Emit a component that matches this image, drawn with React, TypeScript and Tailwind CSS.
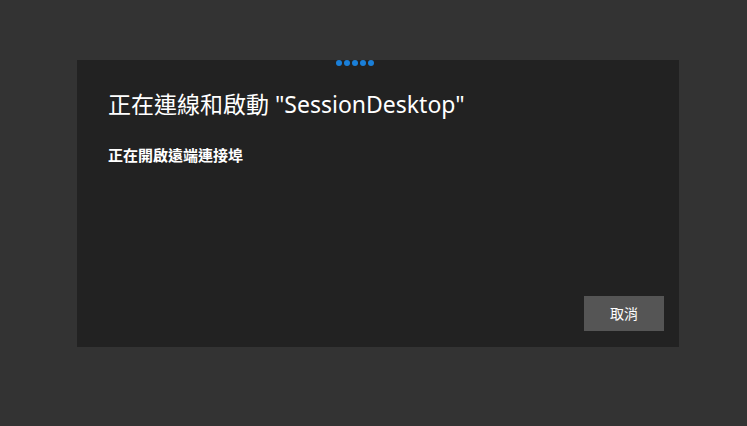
export default function App() {
  return (
    <div
      className="w-[747px] h-[426px] bg-[#333333] flex pl-[77px] pt-[60px]"
      style={{ fontFamily: '"Segoe UI", "Noto Sans", "Noto Sans CJK TC", sans-serif' }}
    >
      <div className="relative w-[602px] h-[287px] bg-[#222222] flex flex-col">
        {/* progress dots */}
        <div className="absolute top-[0px] left-[259px] flex gap-[2.5px]">
          {[0, 1, 2, 3, 4].map(i => (
            <span key={i} className="w-[5.5px] h-[5.5px] rounded-full bg-[#1a7fd8]" />
          ))}
        </div>
        <div className="pl-[31px] pt-[29px]">
          <h1 className="text-[23px] leading-[30px] text-[#ffffff] font-normal">正在連線和啟動 "SessionDesktop"</h1>
          <p className="mt-[26px] text-[15px] leading-[20px] text-[#ffffff] font-semibold">正在開啟遠端連接埠</p>
        </div>
        <div className="mt-auto flex justify-end pr-[15px] pb-[16px]">
          <button className="w-[80px] h-[35px] bg-[#555555] text-[#ffffff] text-[14px]">取消</button>
        </div>
      </div>
    </div>
  )
}
